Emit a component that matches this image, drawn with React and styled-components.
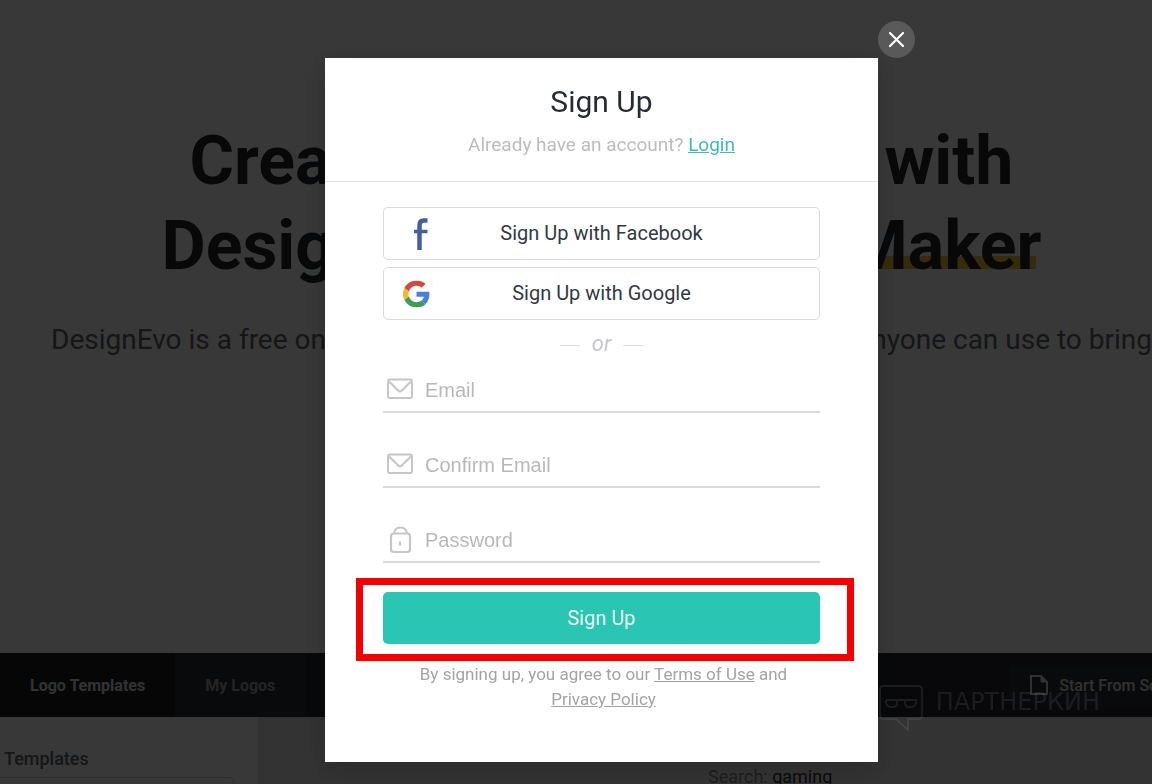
import React from "react";
import styled, { createGlobalStyle } from "styled-components";

const Global = createGlobalStyle`
  *, *::before, *::after { box-sizing: border-box; }
  body { margin: 0; background: #383838; font-family: Roboto, sans-serif; }
  h1, h2, h3, p { margin: 0; }
  button, input { font: inherit; }
`;

const Page = styled.div`
  position: relative;
  min-height: 100vh;
  height: 100vh;
  overflow: hidden;
  display: flex;
  flex-direction: column;
  background: #ffffff;
`;

const Hero = styled.section`
  flex: none;
  height: 653px;
  padding: 119px 0 0 51px;
  display: flex;
  flex-direction: column;
  align-items: center;
`;

const Headline = styled.h1`
  font-size: 68px;
  line-height: 85px;
  font-weight: 700;
  color: #24282c;
  display: flex;
  flex-direction: column;
  align-items: center;
  white-space: nowrap;
`;

const BrandLine = styled.span`
  width: 880px;
  display: flex;
  justify-content: space-between;
`;

const Marked = styled.span`
  background: linear-gradient(#f6c62c, #f6c62c) 0 52px / calc(100% - 6px) 13px no-repeat;
`;

const Lead = styled.p`
  margin-top: 33px;
  font-size: 28px;
  line-height: 36px;
  color: #5f6468;
  white-space: nowrap;
`;

const NavBar = styled.nav`
  flex: none;
  height: 64px;
  display: flex;
  background: #24282f;
`;

const NavTab = styled.a`
  display: flex;
  align-items: center;
  padding: 0 30px;
  font-size: 16px;
  font-weight: 700;
  text-decoration: none;
  color: ${(p) => (p.$active ? "#e4e4e4" : "#a4a4a8")};
  background: ${(p) => (p.$active ? "#1c1e22" : "#2c2f36")};
`;

const StartButton = styled.button`
  margin: 12px -62px 12px auto;
  padding: 0 20px;
  display: flex;
  align-items: center;
  gap: 10px;
  border: 0;
  border-radius: 4px;
  font-size: 16px;
  font-weight: 500;
  white-space: nowrap;
  color: #e0e0e0;
  background: #2c2f36;
`;

const Gallery = styled.section`
  flex: 1;
  display: flex;
  background: #e8e8e8;
`;

const Side = styled.aside`
  width: 258px;
  padding: 30px 24px 0 4px;
  background: #ffffff;
`;

const SideTitle = styled.h2`
  font-size: 18px;
  line-height: 24px;
  font-weight: 500;
  color: #60646a;
`;

const SideBox = styled.div`
  height: 40px;
  margin: 6px 0 0 -8px;
  border: 1px solid #d2d2d2;
  border-radius: 4px;
`;

const Results = styled.p`
  flex: 1;
  padding: 50px 0 0 450px;
  font-size: 18px;
  line-height: 20px;
  color: #8a8a8a;
  span { color: #303030; }
`;

const Overlay = styled.div`
  position: fixed;
  inset: 0;
  display: flex;
  justify-content: center;
  align-items: flex-start;
  padding: 58px 0 22px 51px;
  background: rgba(0, 0, 0, 0.78);
`;

const Dialog = styled.section`
  position: relative;
  width: 553px;
  padding-bottom: 50px;
  background: #ffffff;
  box-shadow: 0 6px 24px rgba(0, 0, 0, 0.2);
`;

const CloseButton = styled.button`
  position: absolute;
  left: 100%;
  bottom: 100%;
  width: 37px;
  height: 37px;
  padding: 0;
  display: grid;
  place-items: center;
  border: 0;
  border-radius: 50%;
  background: #595959;
`;

const DialogHead = styled.header`
  height: 124px;
  padding-top: 24px;
  text-align: center;
  border-bottom: 1px solid #e0e0e2;
`;

const Title = styled.h2`
  font-size: 30px;
  line-height: 40px;
  font-weight: 400;
  color: #262b36;
`;

const Hint = styled.p`
  margin-top: 11px;
  font-size: 19px;
  line-height: 24px;
  color: #bcbcbc;
`;

const AccentLink = styled.a`
  color: #40bbae;
  text-decoration: underline;
`;

const Form = styled.form`
  padding: 25px 58px 0;
  display: flex;
  flex-direction: column;
`;

const SocialButton = styled.button`
  position: relative;
  height: 53px;
  margin-bottom: 7px;
  padding: 0 0 2px;
  border: 1px solid #d9dadd;
  border-radius: 5px;
  background: #ffffff;
  font-size: 20px;
  color: #333942;
`;

const SocialIcon = styled.svg`
  position: absolute;
  left: 19px;
  top: 50%;
  transform: translateY(-50%);
`;

const Divider = styled.div`
  height: 32px;
  margin-bottom: 10px;
  display: flex;
  justify-content: center;
  align-items: center;
  gap: 12px;
  font-size: 22px;
  font-style: italic;
  color: #c6c7cc;
  &::before, &::after {
    content: "";
    width: 20px;
    margin-top: 4px;
    border-top: 1px solid #dcdde0;
  }
`;

const Field = styled.label`
  height: 44px;
  margin-bottom: 31px;
  padding-left: 4px;
  display: flex;
  align-items: center;
  gap: 12px;
  border-bottom: 2px solid #dadada;
`;

const FieldInput = styled.input`
  flex: 1;
  min-width: 0;
  padding: 0;
  border: 0;
  outline: 0;
  background: none;
  font-family: "Liberation Sans", Arial, sans-serif;
  font-size: 20px;
  color: #333942;
  &::placeholder { color: #b8b8b8; opacity: 1; }
`;

const SubmitFrame = styled.div`
  margin: -16px -34px 0 -27px;
  padding: 7px 27px 10px 20px;
  border: 7px solid #f40000;
`;

const SubmitButton = styled.button`
  display: block;
  width: 100%;
  height: 52px;
  border: 0;
  border-radius: 5px;
  background: #2bc5b4;
  font-size: 20px;
  color: #effffc;
`;

const Terms = styled.p`
  margin-top: 1px;
  padding: 0 28px 0 32px;
  text-align: center;
  font-size: 17px;
  line-height: 25px;
  color: #a3a3a3;
  a { color: inherit; }
`;

const Watermark = styled.div`
  position: fixed;
  right: 52px;
  bottom: 52px;
  display: flex;
  align-items: flex-start;
  gap: 13px;
  font-family: "DejaVu Sans", sans-serif;
  font-size: 24px;
  line-height: 35px;
  color: rgba(190, 195, 205, 0.11);
`;

const MailIcon = () => (
  <svg width="26" height="26" viewBox="0 0 26 26" fill="none" stroke="#c6c6c6" strokeWidth="2" strokeLinejoin="round" aria-hidden="true">
    <rect x="1" y="2.500" width="24" height="18.500" rx="2" />
    <path d="M2 4.500L11.500 13.700Q13 15 14.500 13.700L24 4.500" />
  </svg>
);

const LockIcon = () => (
  <svg width="26" height="28" viewBox="0 0 26 28" fill="none" stroke="#c6c6c6" strokeWidth="2.200" aria-hidden="true">
    <rect x="4" y="7.500" width="19" height="18.500" rx="3" />
    <path d="M7 7.500C7.500 3.800 10 1.500 13.500 1.500S19.500 3.800 20 7.500M13 15.500v4" />
  </svg>
);

export default function App() {
  return (
    <>
      <Global />
      <Page>
        <Hero>
          <Headline>
            <span>Create a Custom Logo with</span>
            <BrandLine>
              <span>DesignEvo Free</span>
              <Marked>Logo Maker</Marked>
            </BrandLine>
          </Headline>
          <Lead>DesignEvo is a free online logo maker with 8000+ templates that anyone can use to bring</Lead>
        </Hero>
        <NavBar>
          <NavTab href="#templates" $active>Logo Templates</NavTab>
          <NavTab href="#mine">My Logos</NavTab>
          <StartButton type="button">
            <svg width="20" height="22" viewBox="0 0 20 22" fill="none" stroke="currentColor" strokeWidth="2" aria-hidden="true">
              <path d="M2 2h10l6 6v12H2z" />
              <path d="M12 2v6h6z" fill="currentColor" strokeWidth="1" />
            </svg>
            Start From Scratch
          </StartButton>
        </NavBar>
        <Gallery>
          <Side>
            <SideTitle>Templates</SideTitle>
            <SideBox />
          </Side>
          <Results>Search: <span>gaming</span></Results>
        </Gallery>
      </Page>

      <Overlay>
        <Dialog role="dialog" aria-labelledby="signup-title">
          <CloseButton type="button" aria-label="Close">
            <svg width="17" height="17" viewBox="0 0 17 17" stroke="#ffffff" strokeWidth="2.200" strokeLinecap="round" aria-hidden="true">
              <path d="M2 2L15 15M15 2L2 15" />
            </svg>
          </CloseButton>
          <DialogHead>
            <Title id="signup-title">Sign Up</Title>
            <Hint>Already have an account? <AccentLink href="#login">Login</AccentLink></Hint>
          </DialogHead>
          <Form>
            <SocialButton type="button">
              <SocialIcon width="28" height="34" viewBox="0 0 28 34" fill="none" stroke="#44609c" strokeWidth="4.500" aria-hidden="true">
                <path d="M16.500 33V8.500Q16.500 3.500 20.500 3.500H24.500" />
                <path d="M11 14.500H24.500" strokeWidth="3.500" />
              </SocialIcon>
              Sign Up with Facebook
            </SocialButton>
            <SocialButton type="button">
              <SocialIcon width="27" height="27" viewBox="0 0 48 48" aria-hidden="true">
                <path fill="#cf4b3f" d="M24 9.500c3.540 0 6.710 1.220 9.210 3.600l6.850-6.850C35.900 2.380 30.470 0 24 0 14.620 0 6.510 5.380 2.560 13.220l7.980 6.190C12.430 13.720 17.740 9.500 24 9.500z" />
                <path fill="#4a80dc" d="M46.980 24.550c0-1.570-.15-3.090-.38-4.550H24v9.020h12.940c-.58 2.960-2.260 5.480-4.780 7.180l7.730 6c4.510-4.180 7.090-10.360 7.090-17.650z" />
                <path fill="#efbb2c" d="M10.530 28.590c-.48-1.450-.76-2.990-.76-4.590s.27-3.140.76-4.590l-7.980-6.190C.92 16.460 0 20.120 0 24c0 3.880.92 7.540 2.560 10.780l7.970-6.190z" />
                <path fill="#3f9d58" d="M24 48c6.480 0 11.930-2.130 15.890-5.810l-7.730-6c-2.150 1.450-4.920 2.300-8.160 2.300-6.260 0-11.570-4.220-13.470-9.910l-7.980 6.190C6.510 42.620 14.620 48 24 48z" />
              </SocialIcon>
              Sign Up with Google
            </SocialButton>
            <Divider>or</Divider>
            <Field>
              <MailIcon />
              <FieldInput type="email" placeholder="Email" aria-label="Email" />
            </Field>
            <Field>
              <MailIcon />
              <FieldInput type="email" placeholder="Confirm Email" aria-label="Confirm Email" />
            </Field>
            <Field>
              <LockIcon />
              <FieldInput type="password" placeholder="Password" aria-label="Password" />
            </Field>
            <SubmitFrame>
              <SubmitButton type="submit">Sign Up</SubmitButton>
            </SubmitFrame>
            <Terms>
              By signing up, you agree to our <a href="#terms">Terms of Use</a> and{" "}
              <br />
              <a href="#privacy">Privacy Policy</a>
            </Terms>
          </Form>
        </Dialog>
      </Overlay>

      <Watermark>
        <svg width="44" height="47" viewBox="0 0 44 47" fill="none" stroke="currentColor" strokeWidth="2" aria-hidden="true">
          <path d="M4 1H39Q43 1 43 5V30Q43 34 39 34H29V45L17 34H4Q1 34 1 30V5Q1 1 4 1Z" />
          <path d="M7 15H37V18Q36 22 32 22H30Q26 22 26 18V16M7 15V18Q8 22 12 22H14Q18 22 18 18V16" />
        </svg>
        ПАРТНЕРКИН
      </Watermark>
    </>
  );
}
